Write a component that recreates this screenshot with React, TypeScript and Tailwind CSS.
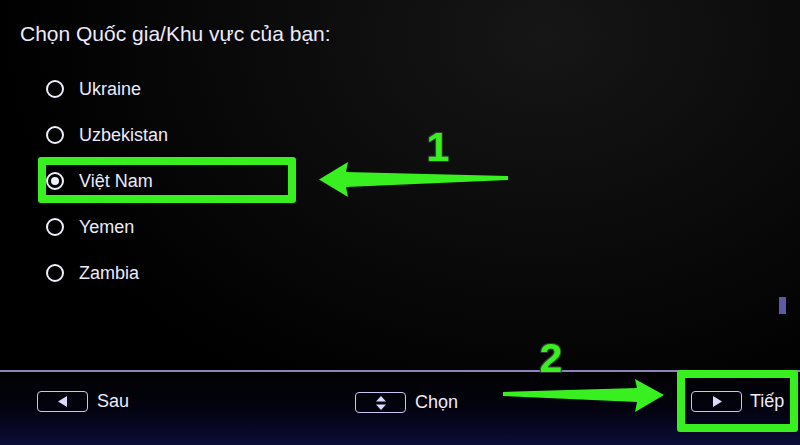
import React from "react";

const countries = ["Ukraine", "Uzbekistan", "Việt Nam", "Yemen", "Zambia"];

function Radio({ checked }: { checked: boolean }) {
  return (
    <span className="flex h-[18px] w-[18px] shrink-0 items-center justify-center rounded-full border-[2.5px] border-[#eeeefc]">
      {checked && <span className="h-[8px] w-[8px] rounded-full bg-[#eeeefc]" />}
    </span>
  );
}

function KeyBox({ children }: { children: React.ReactNode }) {
  return (
    <span className="flex h-[21px] w-[51px] items-center justify-center rounded-[4px] border-[1.5px] border-[#c9c5f2]">
      {children}
    </span>
  );
}

export default function App() {
  return (
    <div
      className="relative h-[445px] w-[800px] overflow-hidden bg-black text-[#ecebfb]"
      style={{ fontFamily: '"Liberation Sans", Arial, sans-serif' }}
    >
      <div className="flex h-full flex-col bg-[radial-gradient(ellipse_at_68%_8%,#161616_0%,#0b0b0b_35%,#000_70%)]">
        {/* main */}
        <div className="flex-1 pl-[20px] pt-[22px]">
          <h1 className="text-[21px] leading-[24px] font-normal">Chọn Quốc gia/Khu vực của bạn:</h1>
          <ul className="mt-[20px] flex flex-col pl-[26px]">
            {countries.map((c) => (
              <li key={c} className="flex h-[46px] items-center gap-[15px] text-[18px]">
                <Radio checked={c === "Việt Nam"} />
                <span>{c}</span>
              </li>
            ))}
          </ul>
        </div>

        {/* footer */}
        <div className="h-[75px] border-t-2 border-[#8985ba] bg-gradient-to-b from-[#010104] via-[#03030f] to-[#0c0d38]">
          <div className="grid grid-cols-[318px_336px_1fr] pl-[37px] pt-[18px] text-[18px] leading-[21px]">
            <div className="flex items-center gap-[9px]">
              <KeyBox>
                <svg width="10" height="11" viewBox="0 0 10 11">
                  <polygon points="9,0 9,11 0,5.5" fill="#dcd8fb" />
                </svg>
              </KeyBox>
              <span>Sau</span>
            </div>
            <div className="flex items-center gap-[9px] pt-[2px]">
              <KeyBox>
                <svg width="10" height="14" viewBox="0 0 10 14">
                  <polygon points="5,0 10,5.5 0,5.5" fill="#dcd8fb" />
                  <polygon points="0,8.5 10,8.5 5,14" fill="#dcd8fb" />
                </svg>
              </KeyBox>
              <span>Chọn</span>
            </div>
            <div className="flex items-center gap-[8px]">
              <KeyBox>
                <svg width="10" height="11" viewBox="0 0 10 11">
                  <polygon points="1,0 10,5.5 1,11" fill="#dcd8fb" />
                </svg>
              </KeyBox>
              <span>Tiếp</span>
            </div>
          </div>
        </div>
      </div>

      {/* scroll thumb */}
      <div className="absolute left-[779px] top-[297px] h-[17px] w-[7px] bg-[#5d5aa8]" />

      {/* annotation: highlight box 1 */}
      <div className="absolute left-[38px] top-[157px] h-[46px] w-[258px] rounded-[3px] border-[8px] border-[#38ef1f]" />
      {/* annotation: highlight box 2 */}
      <div className="absolute left-[677px] top-[370px] h-[62px] w-[121px] rounded-[3px] border-[8px] border-[#38ef1f]" />

      {/* arrow 1 */}
      <svg className="absolute left-[318px] top-[160px]" width="192" height="40" viewBox="0 0 192 40">
        <polygon
          points="1,19.5 30,2 28,12 190,16 190,20 28,27 30,37"
          fill="#38ef1f"
        />
      </svg>
      {/* arrow 2 */}
      <svg className="absolute left-[500px] top-[376px]" width="166" height="40" viewBox="0 0 166 40">
        <polygon
          points="164,19 135,3 137,12 3,16 3,20 137,26 135,36"
          fill="#38ef1f"
        />
      </svg>

      {/* numbers */}
      <div className="absolute left-[418px] top-[127px] w-[40px] text-center text-[41px] leading-[41px] font-bold text-[#38ef1f] [text-shadow:-1px_-1px_0_#333,1px_-1px_0_#333,-1px_1px_0_#333,1px_1px_0_#333]">
        1
      </div>
      <div className="absolute left-[531px] top-[338px] w-[40px] text-center text-[41px] leading-[41px] font-bold text-[#38ef1f] [text-shadow:-1px_-1px_0_#333,1px_-1px_0_#333,-1px_1px_0_#333,1px_1px_0_#333]">
        2
      </div>
    </div>
  );
}
